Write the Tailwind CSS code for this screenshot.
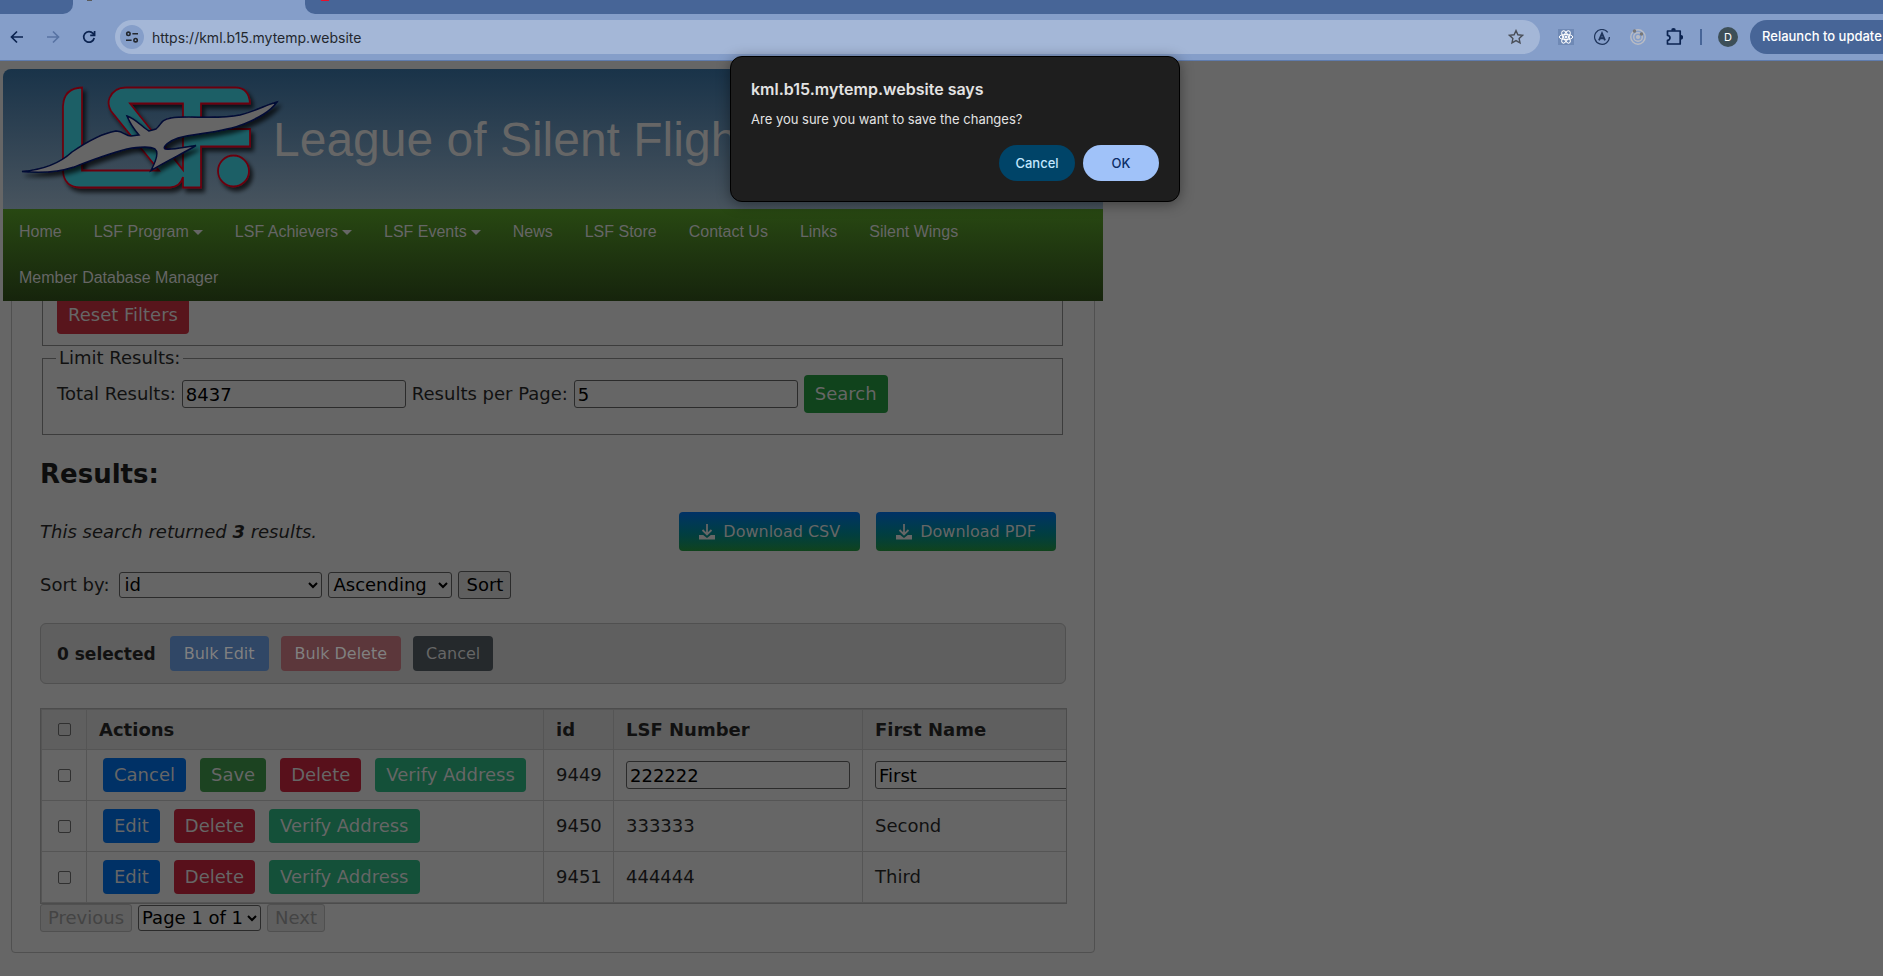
<!DOCTYPE html>
<html lang="en">
<head>
<meta charset="utf-8">
<title>League of Silent Flight</title>
<script src="https://cdn.jsdelivr.net/npm/@tailwindcss/browser@4"></script>
</head>
<body class="relative min-h-screen overflow-hidden bg-[#666] font-['Verdana','DejaVu_Sans',sans-serif] text-[#111]">

<!-- Browser chrome -->
<div class="font-['Inter',sans-serif]">
  <div class="flex h-[14px] bg-[#859ec9]">
    <div class="w-[73px] rounded-br-[10px] bg-[#476597]"></div>
    <div class="flex w-[232px] items-start pl-[14px]"><span class="h-px w-[5px] bg-[#5b5b5b]"></span></div>
    <div class="flex flex-1 items-start rounded-bl-[10px] bg-[#476597] pl-4"><span class="h-px w-[8px] bg-[#e8102c]"></span></div>
  </div>
  <div class="flex h-[47px] items-center border-b border-[#5f7cae] bg-[#859ec9]">
    <button aria-label="Back" class="ml-[9px] flex size-4 items-center justify-center text-[#0b2350]"><svg class="size-4" viewBox="0 0 16 16" fill="none" stroke="currentColor" stroke-width="1.7"><path d="M14 8H3M8 2.5 2.5 8 8 13.5"/></svg></button>
    <button aria-label="Forward" class="ml-5 flex size-4 items-center justify-center text-[#5873a3]"><svg class="size-4" viewBox="0 0 16 16" fill="none" stroke="currentColor" stroke-width="1.7"><path d="M2 8h11M8 2.5 13.5 8 8 13.5"/></svg></button>
    <button aria-label="Reload" class="ml-5 flex size-4 items-center justify-center text-[#0b2350]"><svg class="size-4" viewBox="0 0 16 16" fill="none" stroke="currentColor" stroke-width="1.7"><path d="M13.2 9A5.3 5.3 0 1 1 12 4.4L13.4 6M13.6 2v4.4H9.2"/></svg></button>
    <div class="ml-[18px] flex h-[34px] flex-1 items-center rounded-full bg-[#a4b7d7] pr-4 pl-[5px]">
      <button aria-label="Site information" class="flex size-6 items-center justify-center rounded-full bg-[#859ec9] text-[#23272e]"><svg class="size-[14px]" viewBox="0 0 14 14" fill="none" stroke="currentColor" stroke-width="1.6"><circle cx="3.4" cy="3.8" r="1.7"/><path d="M7.4 3.8H13M1 10.2h5.6"/><circle cx="10.6" cy="10.2" r="1.7"/></svg></button>
      <input aria-label="Address" value="https://kml.b15.mytemp.website" class="ml-2 min-w-0 flex-1 bg-transparent text-[14px] text-[#23272e] outline-none">
      <button aria-label="Bookmark this page" class="text-[#4a4f58]"><svg class="size-4" viewBox="0 0 16 16" fill="none" stroke="currentColor" stroke-width="1.4"><path d="m8 1.6 1.9 4.2 4.6.5-3.4 3.1.9 4.5L8 11.6l-4 2.3.9-4.5L1.500 6.300l4.600-.5z"/></svg></button>
    </div>
    <div class="flex items-center pl-[18px]">
      <svg class="size-4 bg-[#6f89b5]" viewBox="0 0 16 16" fill="none" stroke="#fff" stroke-width="1"><ellipse cx="8" cy="8" rx="6.800" ry="2.600"/><ellipse cx="8" cy="8" rx="6.800" ry="2.600" transform="rotate(60 8 8)"/><ellipse cx="8" cy="8" rx="6.800" ry="2.600" transform="rotate(120 8 8)"/><circle cx="8" cy="8" r="1" fill="#fff"/></svg>
      <svg class="ml-5 size-4" viewBox="0 0 16 16" fill="none" stroke="#1f355c"><path d="M13.800 3.300A7.400 7.400 0 1 0 15.400 8" stroke-width="1.200"/><path d="M5 11.400 8 4.400l3 7M6 9.200h4" stroke-width="1.900"/></svg>
      <svg class="ml-5 size-4" viewBox="0 0 16 16" fill="none" stroke="#b9bcc4" stroke-width="1.400"><circle cx="8" cy="8" r="7.200"/><circle cx="8" cy="8" r="4.300"/><circle cx="8" cy="8" r="1.400" fill="#b9bcc4"/><circle cx="4.500" cy="2" r="1" fill="#777" stroke="#777"/><circle cx="11.500" cy="5" r="1" fill="#777" stroke="#777"/></svg>
      <svg class="ml-5 h-[18px] w-[17px]" viewBox="0 0 17 18" fill="none" stroke="#0b2350" stroke-width="1.700"><path d="M1.500 3h12.700v13H1.500v-3.700a2.300 2.300 0 0 0 0-5z" stroke-linejoin="round"/><path d="M6 2.400a1.500 1.500 0 0 1 3 0M14.800 7.800a1.500 1.500 0 0 1 0 3" fill="#0b2350"/></svg>
      <span class="ml-[17px] h-4 w-[2px] bg-[#476597]"></span>
      <button aria-label="Profile" class="ml-4 size-5 rounded-full bg-[#3d4f58] text-[11px] text-white">D</button>
    </div>
    <button class="ml-3 h-[34px] w-[133px] overflow-hidden rounded-l-full bg-[#476597] pl-3 text-left text-[13px] font-medium whitespace-nowrap text-white">Relaunch to update</button>
  </div>
</div>

<!-- Site -->
<div class="mt-2 ml-[3px] max-w-[1100px]">
  <header class="flex h-[140px] items-center overflow-hidden rounded-t-lg bg-linear-to-b from-[#193349] to-[#48545e]">
    <svg class="h-[140px] w-[270px] shrink-0 overflow-visible" viewBox="3 69 270 140">
      <defs><filter id="sh" x="-10%" y="-10%" width="125%" height="130%"><feDropShadow dx="3" dy="4" stdDeviation="2" flood-color="#000" flood-opacity=".7"/></filter></defs>
      <g filter="url(#sh)" fill="#1f5f66" fill-rule="evenodd" stroke="#6b0011" stroke-width="1.800">
        <path d="M82 87.500V170.500H159L111 111Q107 104 109.500 98Q114 87.500 126 87.500H236Q249 88 250 103.500H201V129H250V146.500H201V187.500H183V177Q180 187 170 187.500H80Q64 187 63 171V106Q64 88 82 87.500ZM183 170V103.500H130Z"/>
        <circle cx="233.500" cy="171" r="15.500"/>
      </g>
      <path filter="url(#sh)" fill="#666" stroke="#050a35" stroke-width="1.500" d="M22 171.500C40 170 58 165 72 152C88 141 104 133 116 131C124 131 125 136 131 136L139 135C133 128 129 121 127 116C136 119 142 127 149 131L156 129C162 124 160 120 171 118C188 115 215 120 240 115C256 111 268 104 277 102C270 112 258 118 244 124C222 133 196 133 178 138C169 141 162 147 165 149C174 150 184 147 196 145.500C184 153 168 160 151 170.500C156 161 159 152 155 149C150 146 141 147 132 148C112 152 92 160 74 167C56 173 38 173 22 171.500Z"/>
    </svg>
    <h1 class="pt-[2px] font-['Liberation_Sans',sans-serif] text-[48px] whitespace-nowrap text-[#666]">League of Silent Flight</h1>
  </header>
  <nav class="relative z-10 flex flex-wrap bg-linear-to-b from-[#284812] to-[#16240c] font-['Liberation_Sans',sans-serif] text-[16px] leading-[46px] text-[#666]">
    <a href="#" class="h-[46px] px-4">Home</a>
    <a href="#" class="flex h-[46px] items-center gap-1 px-4">LSF Program<span class="border-x-5 border-t-5 border-x-transparent border-t-[#666]"></span></a>
    <a href="#" class="flex h-[46px] items-center gap-1 px-4">LSF Achievers<span class="border-x-5 border-t-5 border-x-transparent border-t-[#666]"></span></a>
    <a href="#" class="flex h-[46px] items-center gap-1 px-4">LSF Events<span class="border-x-5 border-t-5 border-x-transparent border-t-[#666]"></span></a>
    <a href="#" class="h-[46px] px-4">News</a>
    <a href="#" class="h-[46px] px-4">LSF Store</a>
    <a href="#" class="h-[46px] px-4">Contact Us</a>
    <a href="#" class="h-[46px] px-4">Links</a>
    <a href="#" class="h-[46px] px-4">Silent Wings</a>
    <a href="#" class="h-[46px] px-4">Member Database Manager</a>
  </nav>

  <main class="-mt-3 mr-2 ml-2 rounded-b border border-[#505050] pr-[27px] pb-5 pl-7 text-[18px] leading-[26px]">
    <div class="mr-1 ml-[2px] border border-[#3c3c3c] px-[14px] pt-[5px] pb-[11px]">
      <button class="h-[38px] rounded bg-[#58151c] px-[11px] whitespace-nowrap text-[#666]">Reset Filters</button>
    </div>
    <fieldset class="mr-1 ml-[2px] border border-[#3c3c3c] px-[14px] pb-[21px]">
      <legend class="-ml-[1px] px-[3px] leading-[24px]">Limit Results:</legend>
      <div class="mt-[5px] flex items-center whitespace-nowrap">
        <label for="total">Total Results:</label>
        <input id="total" value="8437" class="ml-[6px] h-7 w-[224px] rounded-[3px] border border-[#2b2b2b] px-[3px] text-black">
        <label for="per" class="ml-[6px]">Results per Page:</label>
        <input id="per" value="5" class="ml-[6px] h-7 w-[224px] rounded-[3px] border border-[#2b2b2b] px-[3px] text-black">
        <button class="ml-[6px] h-[38px] rounded bg-[#10431c] px-[11px] text-[#666]">Search</button>
      </div>
    </fieldset>

    <h2 class="mt-[20px] text-[26px] leading-[38px] font-bold text-[#0d0d0d]">Results:</h2>
    <div class="mt-[19px] mr-[11px] flex items-center justify-between whitespace-nowrap">
      <p class="italic">This search returned <b>3</b> results.</p>
      <div class="flex gap-4">
        <button class="flex h-[39px] items-center gap-2 rounded bg-linear-to-b from-[#003166] to-[#10431c] px-5 text-[16px] text-[#666]"><svg class="size-4" viewBox="0 0 16 16" fill="none" stroke="currentColor" stroke-width="1.800"><path d="M8 0v10M3.500 6 8 10.500 12.500 6"/><path d="M0 11h4.200L8 14l3.800-3H16v4.500H0z" fill="currentColor" stroke="none"/></svg>Download CSV</button>
        <button class="flex h-[39px] items-center gap-2 rounded bg-linear-to-b from-[#003166] to-[#10431c] px-5 text-[16px] text-[#666]"><svg class="size-4" viewBox="0 0 16 16" fill="none" stroke="currentColor" stroke-width="1.800"><path d="M8 0v10M3.500 6 8 10.500 12.500 6"/><path d="M0 11h4.200L8 14l3.800-3H16v4.500H0z" fill="currentColor" stroke="none"/></svg>Download PDF</button>
      </div>
    </div>

    <div class="mt-5 flex items-center gap-[6px] whitespace-nowrap">
      <label for="sort" class="mr-1">Sort by:</label>
      <div class="relative"><select id="sort" class="block h-[26px] w-[203px] appearance-none rounded-[3px] border border-[#2b2b2b] pl-1 leading-6 text-black"><option>id</option></select><svg class="pointer-events-none absolute top-[10px] right-1 h-[7px] w-[10px]" viewBox="0 0 10 7" fill="none" stroke="#000" stroke-width="2"><path d="m1 1 4 4 4-4"/></svg></div>
      <div class="relative"><select aria-label="Sort order" class="block h-[26px] w-[124px] appearance-none rounded-[3px] border border-[#2b2b2b] pl-1 leading-6 text-black"><option>Ascending</option></select><svg class="pointer-events-none absolute top-[10px] right-1 h-[7px] w-[10px]" viewBox="0 0 10 7" fill="none" stroke="#000" stroke-width="2"><path d="m1 1 4 4 4-4"/></svg></div>
      <button class="h-7 rounded-[3px] border border-[#2b2b2b] bg-[#5f5f5f] px-[7px] leading-6 text-black">Sort</button>
    </div>

    <div class="mt-6 mr-[1px] flex h-[61px] items-center rounded-md border border-[#505050] bg-[#5f5f5f] px-4 text-[16px] whitespace-nowrap">
      <span class="mr-[14px] text-[17px] font-bold">0 selected</span>
      <button disabled class="mr-3 h-[35px] rounded bg-[#304766] px-[14px] text-[#808080]">Bulk Edit</button>
      <button disabled class="mr-3 h-[35px] rounded bg-[#5c373b] px-[14px] text-[#808080]">Bulk Delete</button>
      <button class="h-[35px] rounded bg-[#25292c] px-[13px] text-[#666]">Cancel</button>
    </div>

    <div class="mt-6 overflow-hidden border border-[#4c4c4c]">
      <table class="w-[1300px] table-fixed border-collapse border border-[#505050] text-left whitespace-nowrap">
        <colgroup><col class="w-[45px]"><col class="w-[457px]"><col class="w-[70px]"><col class="w-[249px]"><col></colgroup>
        <thead><tr class="h-10 bg-[#5f5f5f] font-bold">
          <th class="border border-[#555] text-center"><input type="checkbox" aria-label="Select all" class="mx-auto block size-[13px] appearance-none rounded-[2px] border border-[#303030]"></th>
          <th class="border border-[#555] px-3">Actions</th><th class="border border-[#555] px-3">id</th><th class="border border-[#555] px-3">LSF Number</th><th class="border border-[#555] px-3">First Name</th></tr></thead>
        <tbody>
        <tr class="h-[51px]">
          <td class="border border-[#555]"><input type="checkbox" aria-label="Select 9449" class="mx-auto block size-[13px] appearance-none rounded-[2px] border border-[#303030]"></td>
          <td class="border border-[#555] px-4"><div class="flex gap-[14px] text-[#666]"><button class="h-[34px] rounded bg-[#003166] px-[11px]">Cancel</button><button class="h-[34px] rounded bg-[#1c4321] px-[11px]">Save</button><button class="h-[34px] rounded bg-[#58101b] px-[11px]">Delete</button><button class="h-[34px] rounded bg-[#145039] px-[11px]">Verify Address</button></div></td>
          <td class="border border-[#555] px-3">9449</td>
          <td class="border border-[#555] px-3"><input aria-label="LSF Number" value="222222" class="block h-7 w-[224px] rounded-[3px] border border-[#2b2b2b] px-[3px] text-black"></td>
          <td class="border border-[#555] px-3"><input aria-label="First Name" value="First" class="block h-7 w-[224px] rounded-[3px] border border-[#2b2b2b] px-[3px] text-black"></td>
        </tr>
        <tr class="h-[51px]">
          <td class="border border-[#555]"><input type="checkbox" aria-label="Select 9450" class="mx-auto block size-[13px] appearance-none rounded-[2px] border border-[#303030]"></td>
          <td class="border border-[#555] px-4"><div class="flex gap-[14px] text-[#666]"><button class="h-[34px] rounded bg-[#003166] px-[11px]">Edit</button><button class="h-[34px] rounded bg-[#58101b] px-[11px]">Delete</button><button class="h-[34px] rounded bg-[#145039] px-[11px]">Verify Address</button></div></td>
          <td class="border border-[#555] px-3">9450</td><td class="border border-[#555] px-3">333333</td><td class="border border-[#555] px-3">Second</td>
        </tr>
        <tr class="h-[51px]">
          <td class="border border-[#555]"><input type="checkbox" aria-label="Select 9451" class="mx-auto block size-[13px] appearance-none rounded-[2px] border border-[#303030]"></td>
          <td class="border border-[#555] px-4"><div class="flex gap-[14px] text-[#666]"><button class="h-[34px] rounded bg-[#003166] px-[11px]">Edit</button><button class="h-[34px] rounded bg-[#58101b] px-[11px]">Delete</button><button class="h-[34px] rounded bg-[#145039] px-[11px]">Verify Address</button></div></td>
          <td class="border border-[#555] px-3">9451</td><td class="border border-[#555] px-3">444444</td><td class="border border-[#555] px-3">Third</td>
        </tr>
        </tbody>
      </table>
    </div>
    <div class="flex items-center gap-[6px] whitespace-nowrap">
      <button disabled class="h-7 rounded-[3px] border border-[#505050] bg-[#5f5f5f] px-[7px] leading-6 text-[#444]">Previous</button>
      <div class="relative"><select aria-label="Page" class="block h-[26px] w-[123px] appearance-none rounded-[3px] border border-[#2b2b2b] pl-[3px] leading-6 text-black"><option>Page 1 of 1</option></select><svg class="pointer-events-none absolute top-[10px] right-1 h-[7px] w-[10px]" viewBox="0 0 10 7" fill="none" stroke="#000" stroke-width="2"><path d="m1 1 4 4 4-4"/></svg></div>
      <button disabled class="h-7 rounded-[3px] border border-[#505050] bg-[#5f5f5f] px-[7px] leading-6 text-[#444]">Next</button>
    </div>
  </main>
</div>

<!-- Confirmation dialog -->
<div role="dialog" aria-labelledby="dt" class="absolute top-14 left-[730px] z-20 w-[450px] rounded-xl border border-black bg-[#1e1e1e] p-5 font-['Inter',sans-serif] text-[#e3e3e3] shadow-[0_2px_14px_rgba(0,0,0,0.4)]">
  <h2 id="dt" class="text-[16px] leading-6 font-semibold">kml.b15.mytemp.website says</h2>
  <p class="mt-2 text-[13px] leading-5">Are you sure you want to save the changes?</p>
  <div class="mt-4 flex justify-end gap-2 text-[13px] font-medium">
    <button class="h-9 w-[76px] rounded-full bg-[#004468] pt-px text-[#c2e7ff]">Cancel</button>
    <button class="h-9 w-[76px] rounded-full bg-[#a0c2f9] pt-px text-[#0b2d66]">OK</button>
  </div>
</div>
</body>
</html>
